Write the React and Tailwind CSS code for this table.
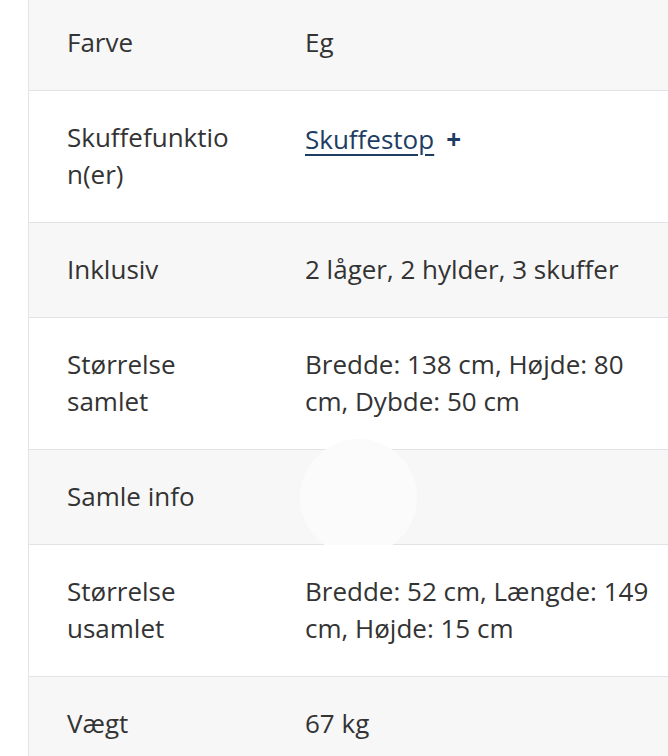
import React from "react";

const rows = [
  { label: "Farve", value: "Eg" },
  { label: "Skuffefunktion(er)", value: "link" },
  { label: "Inklusiv", value: "2 låger, 2 hylder, 3 skuffer" },
  { label: "Størrelse samlet", value: "Bredde: 138 cm, Højde: 80 cm, Dybde: 50 cm" },
  { label: "Samle info", value: "", loader: true },
  { label: "Størrelse usamlet", value: "Bredde: 52 cm, Længde: 149 cm, Højde: 15 cm" },
  { label: "Vægt", value: "67 kg" },
];

export default function App() {
  return (
    <div
      className="w-full h-[756px] overflow-hidden bg-white pl-[28px] text-[#333333] text-[26px] leading-[37px]"
      style={{ fontFamily: '"Open Sans", "Noto Sans", sans-serif' }}
    >
      <div className="border-l border-[#e4e4e4] -mt-[4px] w-[640px]">
        {rows.map((row, i) => (
          <div
            key={row.label}
            className={
              "relative flex border-b border-[#e1e4e6] " +
              (i % 2 === 0 ? "bg-[#f7f7f7]" : "bg-white")
            }
          >
            <div className="w-[238px] shrink-0 pl-[38px] pr-[38px] pt-[28px] pb-[29px] break-words">
              {row.label}
            </div>
            <div className="flex-1 pl-[38px] pr-[8px] pt-[28px] pb-[29px]">
              {row.value === "link" ? (
                <span className="relative top-[2px] inline-flex items-center">
                  <a href="#" className="text-[#1d3d63] underline underline-offset-[5px] decoration-[2px]">
                    Skuffestop
                  </a>
                  <span className="ml-[12px] text-[#1d3d63] font-bold">+</span>
                </span>
              ) : (
                row.value
              )}
            </div>
            {row.loader && (
              <div className="absolute left-[271px] top-[-11px] w-[117px] h-[117px] rounded-full bg-[#fbfbfb]" />
            )}
          </div>
        ))}
      </div>
    </div>
  );
}
